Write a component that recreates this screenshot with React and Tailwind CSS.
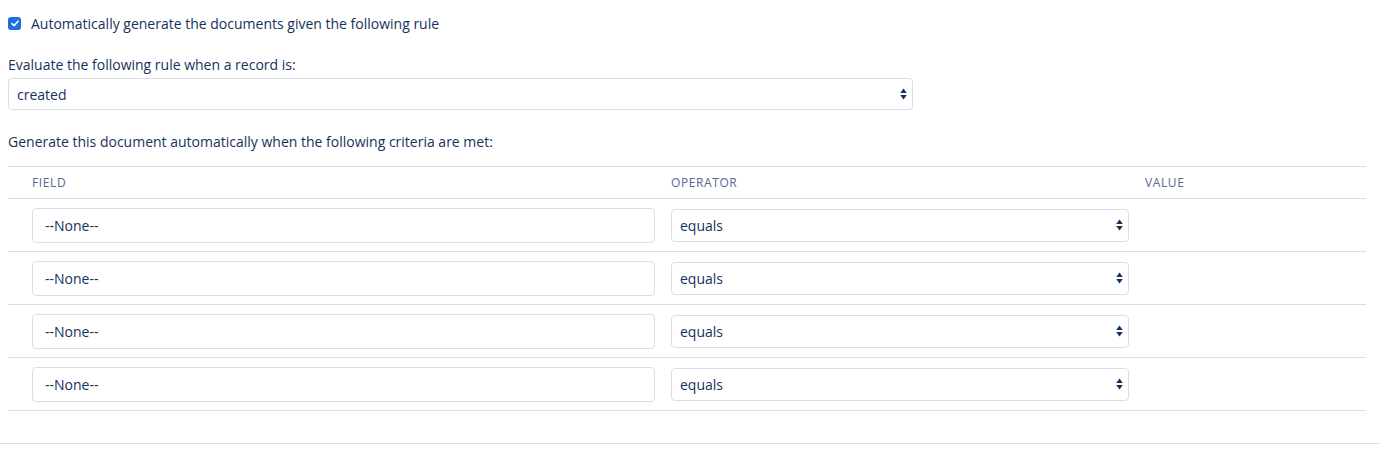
import React from 'react';

// Small up/down caret drawn for the native-looking selects
const SelectArrows = () => (
  <svg
    className="pointer-events-none absolute right-[6px] top-1/2 -translate-y-1/2"
    width="7"
    height="12"
    viewBox="0 0 7 12"
  >
    <path d="M3.5 0.5 L6.8 5 H0.2 Z" fill="#16325c" />
    <path d="M3.5 11.5 L6.8 7 H0.2 Z" fill="#16325c" />
  </svg>
);

const Select = ({ value, className = '' }) => (
  <div className={`relative ${className}`}>
    <select
      defaultValue={value}
      className="w-full h-full appearance-none rounded border border-[#d8dde6] bg-white pl-[8px] pr-6 text-[14px] text-[#16325c] outline-none"
    >
      <option value={value}>{value}</option>
    </select>
    <SelectArrows />
  </div>
);

const rows = [1, 2, 3, 4];

const App = () => {
  return (
    <div
      className="w-[1380px] bg-white text-[14px] text-[#16325c] border-b border-[#d8dde6]"
      style={{ fontFamily: '"Open Sans", "Noto Sans", Arial, sans-serif' }}
    >
      <div className="pl-2 pr-[14px] pt-[16px] pb-[32px]">
        {/* Auto-generate checkbox */}
        <label className="flex items-center h-[14px]">
          <span className="flex items-center justify-center w-[13px] h-[13px] rounded-[3px] bg-[#1b6fe0]">
            <svg width="8" height="7" viewBox="0 0 8 7">
              <path d="M1 3.6 L3 5.6 L7 1.2" fill="none" stroke="white" strokeWidth="1.6" strokeLinecap="round" strokeLinejoin="round" />
            </svg>
          </span>
          <span className="ml-[10px] leading-[14px] pt-px">Automatically generate the documents given the following rule</span>
        </label>

        {/* Trigger */}
        <div className="mt-[26px] leading-[18px]">Evaluate the following rule when a record is:</div>
        <Select value="created" className="mt-[4px] w-[905px] h-[32px]" />

        <div className="mt-[23px] leading-[18px]">Generate this document automatically when the following criteria are met:</div>

        {/* Criteria table */}
        <table className="mt-[15px] w-full border-collapse table-fixed">
          <colgroup>
            <col className="w-[655px]" />
            <col className="w-[474px]" />
            <col />
          </colgroup>
          <thead>
            <tr className="border-t border-b border-[#d8dde6] h-[32px]">
              <th className="pl-6 text-left text-[12px] font-normal tracking-[0.05em] text-[#54698d]">FIELD</th>
              <th className="pl-2 text-left text-[12px] font-normal tracking-[0.05em] text-[#54698d]">OPERATOR</th>
              <th className="pl-2 text-left text-[12px] font-normal tracking-[0.05em] text-[#54698d]">VALUE</th>
            </tr>
          </thead>
          <tbody>
            {rows.map((r) => (
              <tr key={r} className="border-b border-[#d8dde6] h-[53px]">
                <td className="pl-6 pr-2 align-middle">
                  <input
                    readOnly
                    value="--None--"
                    className="w-full h-[35px] rounded border border-[#d8dde6] bg-white px-3 text-[14px] text-[#16325c] outline-none"
                  />
                </td>
                <td className="pl-2 pr-2 align-middle">
                  <Select value="equals" className="h-[33px]" />
                </td>
                <td />
              </tr>
            ))}
          </tbody>
        </table>
      </div>
    </div>
  );
};

export default App;
